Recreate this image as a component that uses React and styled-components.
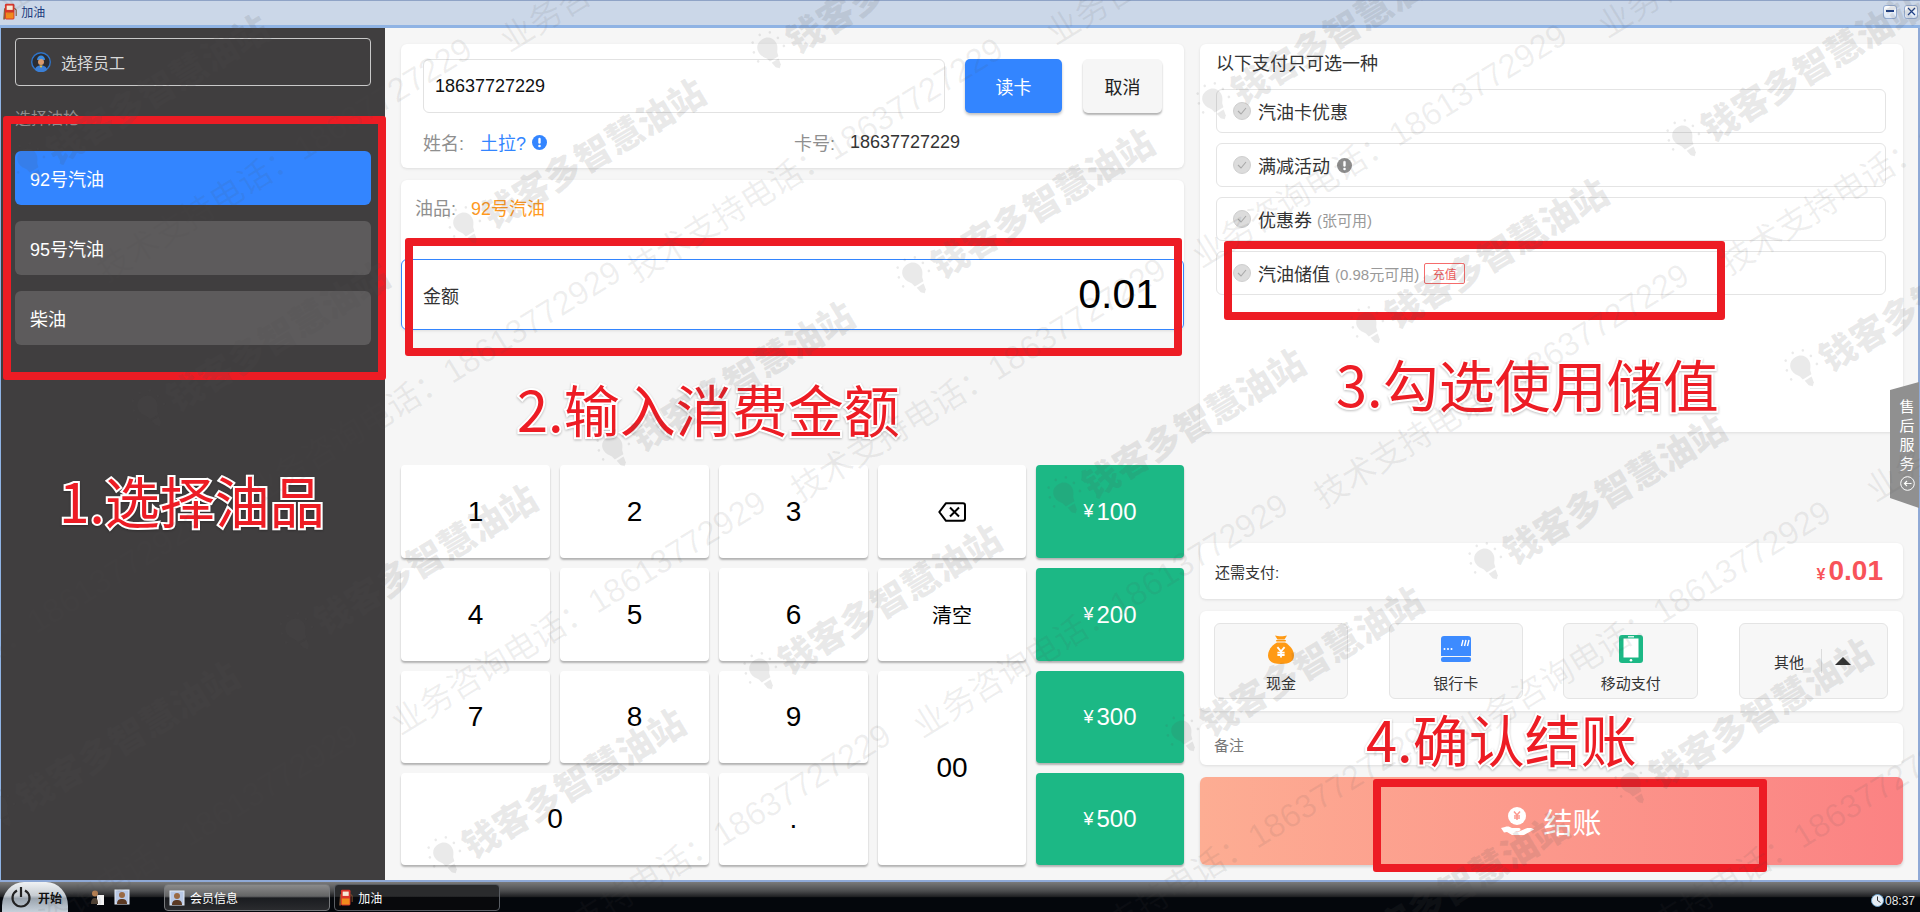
import React from "react";
import styled, { createGlobalStyle } from "styled-components";

const SANS = `"Liberation Sans","Noto Sans CJK SC",sans-serif`;

const Global = createGlobalStyle`
  html, body { margin: 0; padding: 0; background: #f6f6f6; }
  * { box-sizing: border-box; }
  body { font-family: ${SANS}; }
`;

const Screen = styled.div`
  position: relative; width: 1920px; height: 912px; overflow: hidden;
  display: flex; flex-direction: column; font-family: ${SANS}; color: #333;
`;

/* ---------- window chrome ---------- */
const TitleBar = styled.div`
  height: 28px; flex: none; display: flex; align-items: center; gap: 4px; padding: 0 2px 3px 3px;
  background: #cbd7e8; border-top: 1px solid #8fa3c6; border-bottom: 3px solid #8fb3e4;
`;
const TitleText = styled.span` font-size: 12px; color: #1c3b7c; `;
const TitleSpacer = styled.div` flex: 1; `;
const WinBtn = styled.div`
  width: 14px; height: 14px; border: 1px solid #93aad0; border-radius: 3px; background: linear-gradient(#fdfeff,#dbe6f5);
  display: flex; align-items: center; justify-content: center; margin-left: 3px;
`;
const Body = styled.div`
  flex: 1; min-height: 0; display: flex;
  border-left: 1px solid #8fb3e4; border-right: 2px solid #8fa9d6;
`;

/* ---------- sidebar ---------- */
const Sidebar = styled.aside`
  width: 384px; flex: none; background: #403e3f; padding: 10px 14px 0;
`;
const StaffBox = styled.div`
  height: 48px; width: 356px; border: 1px solid #c9c9c9; border-radius: 4px; display: flex; align-items: center;
  padding-left: 15px; gap: 10px; color: #d8d8d8; font-size: 16px;
`;
const SideLabel = styled.div` margin-top: 21px; height: 24px; line-height: 24px; font-size: 16px; color: #8e8e8e; `;
const OilList = styled.div` margin-top: 20px; display: flex; flex-direction: column; gap: 16px; width: 356px; `;
const OilItem = styled.div`
  height: 54px; border-radius: 6px; padding-left: 15px; display: flex; align-items: center;
  font-size: 18px; color: #fff; background: ${p => (p.$active ? "#3385ff" : "#5d5b5c")};
`;

/* ---------- main ---------- */
const Main = styled.main`
  flex: 1; min-width: 0; background: #f6f6f6; display: flex; gap: 16px; padding: 16px 15px 15px 16px;
`;
const Center = styled.div` width: 783px; flex: none; display: flex; flex-direction: column; `;
const Right = styled.div` width: 703px; flex: none; display: flex; flex-direction: column; `;
const Card = styled.section`
  background: #fff; border-radius: 6px; box-shadow: 0 1px 3px rgba(0,0,0,.1);
`;
const MemberCard = styled(Card)` height: 124px; padding: 15px 22px 0; `;
const ReadRow = styled.div` display: flex; align-items: stretch; height: 54px; `;
const CardInput = styled.div`
  width: 522px; border: 1px solid #e2e2e2; border-radius: 6px; display: flex; align-items: center;
  padding-left: 11px; font-size: 18px; color: #111;
`;
const ReadBtn = styled.div`
  width: 97px; margin-left: 20px; border-radius: 5px; background: #3385ff; color: #fff; font-size: 18px;
  display: flex; align-items: center; justify-content: center; box-shadow: 0 2px 3px rgba(0,0,0,.25);
`;
const CancelBtn = styled.div`
  width: 79px; margin-left: 21px; border-radius: 5px; background: #f6f6f6; color: #222; font-size: 18px;
  display: flex; align-items: center; justify-content: center; box-shadow: 0 2px 2px rgba(0,0,0,.3);
`;
const InfoRow = styled.div` margin-top: 17px; display: flex; align-items: center; height: 24px; font-size: 18px; `;
const InfoKey = styled.span` color: #8f8f8f; width: ${p => p.$w}px; flex: none; `;
const NameVal = styled.span` color: #3385ff; margin-right: 6px; `;
const CardNo = styled.span` color: #333; `;
const InfoSlot = styled.div` width: 371px; display: flex; align-items: center; flex: none; `;

const FuelCard = styled(Card)` margin-top: 12px; `;
const FuelRow = styled.div` height: 79px; padding: 0 14px 26px; display: flex; align-items: center; font-size: 18px; `;
const FuelVal = styled.span` color: #ff9a1f; `;
const AmountBox = styled.div`
  height: 71px; border: 1px solid #3385ff; border-radius: 6px; background: #fff; display: flex; align-items: center;
  justify-content: space-between; padding: 0 25px 0 21px;
`;
const AmountLabel = styled.span` font-size: 18px; color: #333; `;
const AmountValue = styled.span` font-size: 41px; color: #000; `;

const Pad = styled.div`
  margin-top: auto; display: grid; gap: 10px;
  grid-template-columns: 149px 149px 149px 148px 148px;
  grid-template-rows: 93px 93px 92px 92px;
`;
const Key = styled.div`
  background: ${p => (p.$green ? "#1cb885" : "#fff")}; color: ${p => (p.$green ? "#fff" : "#000")};
  font-size: ${p => p.$size || 28}px; border-radius: 4px; box-shadow: 0 2px 2px rgba(0,0,0,.28);
  display: flex; align-items: center; justify-content: center;
  grid-column: ${p => p.$col || "auto"}; grid-row: ${p => p.$row || "auto"};
`;
const Yen = styled.span` font-size: 18px; margin-right: 3px; `;

/* ---------- right column ---------- */
const OptionsCard = styled(Card)` height: 388px; padding: 7px 17px 0 16px; `;
const OptionsTitle = styled.div` height: 26px; line-height: 26px; font-size: 18px; color: #333; margin-bottom: 12px; `;
const OptionList = styled.div` display: flex; flex-direction: column; gap: 10px; `;
const Option = styled.div`
  height: 44px; border: 1px solid #e4e4e4; border-radius: 6px; display: flex; align-items: center;
  padding-left: 16px; font-size: 18px; color: #333;
`;
const Check = styled.span`
  width: 18px; height: 18px; border-radius: 50%; background: #dcdcdc; border: 1px solid #cfcfcf; margin-right: 7px; flex: none;
  display: flex; align-items: center; justify-content: center;
`;
const Sub = styled.span` font-size: 15px; color: #999; margin-left: 5px; `;
const Tag = styled.span`
  font-size: 12px; color: #f25c5c; border: 1px solid #f56c6c; border-radius: 2px; width: 41px; height: 21px;
  display: flex; align-items: center; justify-content: center; margin-left: 5px;
`;
const OptionInfo = styled.span` display: flex; margin-left: 7px; `;
const DueCard = styled(Card)`
  margin-top: auto; height: 56px; display: flex; align-items: center; justify-content: space-between; padding: 0 20px 0 15px;
`;
const DueLabel = styled.span` font-size: 15px; color: #333; `;
const DueValue = styled.span` font-size: 28px; font-weight: 700; color: #f8535a; display: flex; align-items: baseline; `;
const DueYen = styled.span` font-size: 16px; margin-right: 3px; `;
const MethodCard = styled(Card)`
  margin-top: 12px; height: 100px; padding: 12px 15px 12px 14px; display: flex; justify-content: space-between;
`;
const Method = styled.div`
  width: ${p => p.$w}px; background: #f7f7f7; border: 1px solid #e4e4e4; border-radius: 6px; display: flex; flex-direction: column;
  align-items: center; padding-top: 10px; font-size: 15px; color: #333;
`;
const MethodIcon = styled.div` height: 30px; display: flex; align-items: center; margin-bottom: 9px; `;
const MethodText = styled.div` line-height: 22px; `;
const MoreBtn = styled.div`
  width: 149px; background: #f7f7f7; border: 1px solid #e4e4e4; border-radius: 6px; display: flex; align-items: center;
  padding-left: 34px; font-size: 15px; color: #333;
`;
const MoreDivider = styled.span` width: 1px; height: 24px; background: #dcdcdc; margin: 0 13px 0 17px; `;
const Arrow = styled.span`
  width: 0; height: 0; border-left: 8px solid transparent; border-right: 8px solid transparent; border-bottom: 8px solid #333;
`;
const NoteCard = styled(Card)`
  margin-top: 12px; height: 42px; display: flex; align-items: center; padding-left: 14px; font-size: 15px; color: #777;
`;
const PayBtn = styled.div`
  margin-top: 12px; height: 88px; border-radius: 6px; background: linear-gradient(90deg,#fdad93,#fb8283);
  display: flex; align-items: center; justify-content: center; gap: 9px; color: #fff; font-size: 29px;
  box-shadow: 0 2px 3px rgba(0,0,0,.15);
`;

/* ---------- taskbar ---------- */
const Taskbar = styled.footer`
  height: 32px; flex: none; display: flex; align-items: stretch; position: relative; padding-left: 2px;
  border-top: 2px solid #8fa9d6;
  background: linear-gradient(#7a7a7a 0,#4b4c4e 30%,#1c1d20 50%,#04070c 52%,#04070c 100%);
`;
const StartOrb = styled.div`
  width: 66px; border-radius: 22px 22px 0 0 / 24px 24px 0 0; display: flex; align-items: center; gap: 6px; padding-left: 8px;
  background: linear-gradient(#f0f2f4,#c6ccd2 45%,#9aa4ae 55%,#c6d0da);
  font-size: 12px; font-weight: 700; color: #111;
`;
const Tray = styled.div` display: flex; align-items: center; gap: 10px; margin-left: 23px; width: 73px; `;
const TaskBtn = styled.div`
  width: 166px; margin: 2px 4px 1px 0; border: 1px solid ${p => (p.$active ? "#5a5e64" : "#77797c")}; border-radius: 4px;
  background: ${p => (p.$active
    ? "linear-gradient(#2a2b2d,#2a2b2d 45%,#08090c 50%)"
    : "linear-gradient(#8b8b8b,#636465 45%,#1a1c20 52%,#2a2b2e)")};
  display: flex; align-items: center; gap: 5px; padding-left: 4px; color: #fff; font-size: 12px;
`;
const Clock = styled.div`
  margin-left: auto; display: flex; align-items: center; gap: 1px; padding: 7px 5px 0 0; color: #e8e8e8; font-size: 12px;
`;

/* ---------- overlays ---------- */
const AfterSale = styled.div`
  position: absolute; left: 1890px; top: 382px; width: 29px; height: 126px; background: #909090;
  clip-path: polygon(0 8px, 100% 0, 100% 100%, 0 116px);
  display: flex; flex-direction: column; align-items: center; padding: 15px 0 0 5px; color: #fff; font-size: 15px; line-height: 19px;
`;
const AfterIcon = styled.div` margin-top: 3px; height: 16px; `;
const RedRect = styled.div.attrs(p => ({ style: { left: p.$x, top: p.$y, width: p.$w, height: p.$h } }))`
  position: absolute; border: 8px solid #ed1c24; border-radius: 3px; z-index: 3;
`;
const Step = styled.div.attrs(p => ({ style: { left: p.$x, top: p.$y } }))`
  position: absolute; z-index: 4; white-space: nowrap; font-family: "Noto Sans CJK SC", sans-serif; font-size: ${p => p.$size}px; line-height: 1;
  color: #ed1c24; -webkit-text-stroke: 4px #fff; paint-order: stroke fill; filter: drop-shadow(0 1px 1px rgba(0,0,0,.25));
`;
const Watermarks = styled.div`
  position: absolute; inset: 0; pointer-events: none; overflow: hidden; z-index: 5;
`;
const PhoneMark = styled.div.attrs(p => ({ style: { left: p.$x, top: p.$y } }))`
  position: absolute; white-space: nowrap; font-size: 33px; line-height: 1; color: rgba(80,80,80,.09);
  font-family: ${SANS}; transform-origin: 0 100%; transform: translateY(-100%) rotate(-31.7deg);
`;
const LogoMark = styled.div.attrs(p => ({ style: { left: p.$x, top: p.$y } }))`
  position: absolute; white-space: nowrap; display: flex; align-items: center; gap: 4px; color: rgba(80,80,80,.12);
  font-size: 36px; font-weight: 900; line-height: 1; font-family: "Noto Sans CJK SC", sans-serif;
  transform-origin: 0 0; transform: rotate(-31deg) translate(-17px,-50%);
`;

/* ---------- drawings ---------- */
const Pump = ({ size = 16 }) => (
  <svg width={size * 0.95} height={size * 1.15} viewBox="0 0 16 20">
    <rect x="2" y="1" width="11" height="18" rx="1.5" fill="#d9352a" />
    <rect x="4" y="3" width="7" height="5" fill="#f6e9d6" />
    <rect x="3" y="11" width="9" height="7" fill="#f08a1d" />
    <path d="M13 6l2 2v7" stroke="#7a4a2a" strokeWidth="1.2" fill="none" />
    <path d="M0 19h2V6H1z" fill="#8b5a36" />
  </svg>
);
const Person = () => (
  <svg width="16" height="16" viewBox="0 0 16 16">
    <rect x="1" y="1" width="14" height="14" fill="#b9c9e6" stroke="#e6edf8" />
    <circle cx="8" cy="6" r="3" fill="#9a6a44" />
    <path d="M3 15c0-4 2-5 5-5s5 1 5 5z" fill="#5b3a24" />
  </svg>
);
const ManDoc = () => (
  <svg width="13" height="15" viewBox="0 0 13 15">
    <rect x="6" y="5" width="7" height="10" fill="#f2f2f2" />
    <circle cx="4" cy="3.5" r="3" fill="#b47f52" />
    <path d="M0 14c0-5 2-6 4-6s3 1 3 6z" fill="#4e4134" />
  </svg>
);
const Avatar = () => (
  <svg width="20" height="20" viewBox="0 0 20 20">
    <circle cx="10" cy="10" r="9.3" fill="#2b2d33" stroke="#2f74c9" strokeWidth="1.4" />
    <path d="M6 8c0-3 2-4.5 4-4.5S14 5 14 8z" fill="#3b8be0" />
    <circle cx="10" cy="10" r="3" fill="#d99a6c" />
    <path d="M4 18c.5-3.5 3-4.5 6-4.5s5.500 1 6 4.500a9 9 0 0 1-12 0z" fill="#3b7fd6" />
    <path d="M8.500 13.500h3L10 16z" fill="#f0c23a" />
  </svg>
);
const InfoDot = ({ color }) => (
  <svg width="15" height="15" viewBox="0 0 15 15">
    <circle cx="7.500" cy="7.500" r="7.500" fill={color} />
    <rect x="6.300" y="2.800" width="2.400" height="6" rx="1.200" fill="#fff" />
    <circle cx="7.500" cy="11" r="1.300" fill="#fff" />
  </svg>
);
const Tick = () => (
  <svg width="10" height="8" viewBox="0 0 10 8">
    <path d="M1 4l3 3 5-6" stroke="#a8a8a8" strokeWidth="1.100" fill="none" />
  </svg>
);
const Backspace = () => (
  <svg width="28" height="20" viewBox="0 0 28 20">
    <path d="M8 1.200h17a2 2 0 0 1 2 2v13.600a2 2 0 0 1-2 2H8L1.300 10z" fill="none" stroke="#000" strokeWidth="2" strokeLinejoin="round" />
    <path d="M12 5.500l9 9M21 5.500l-9 9" stroke="#000" strokeWidth="2" />
  </svg>
);
const YenLines = ({ x, y, s, color }) => (
  <path
    d={`M${x - 3 * s} ${y - 4 * s}L${x} ${y - 0.5 * s}L${x + 3 * s} ${y - 4 * s}M${x} ${y - 0.5 * s}V${y + 4.500 * s}M${x - 3 * s} ${y + 0.5 * s}H${x + 3 * s}M${x - 3 * s} ${y + 2.500 * s}H${x + 3 * s}`}
    stroke={color} strokeWidth={1.500 * s} fill="none"
  />
);
const MoneyBag = () => (
  <svg width="26" height="29" viewBox="0 0 26 29">
    <path d="M7 0.500c3 1 9 1 12 0l-2.500 4h-7z" fill="#ff9a14" />
    <rect x="8" y="5" width="10" height="1.500" rx=".7" fill="#ff9a14" />
    <path d="M9 7.500h8c5 2.500 9 8 9 13 0 5-4 8.500-13 8.500S0 25.500 0 20.500c0-5 4-10.500 9-13z" fill="#ff9a14" />
    <YenLines x={13} y={17} s={1.200} color="#fff" />
  </svg>
);
const BankCard = () => (
  <svg width="30" height="26" viewBox="0 0 30 26">
    <path d="M0 3a3 3 0 0 1 3-3h24a3 3 0 0 1 3 3v17H0z" fill="#3d8bff" />
    <rect x="0" y="21" width="30" height="5" rx="2" fill="#3d8bff" />
    <path d="M22 4l-1.500 6M25 4l-1.500 6M28 4l-1.500 6" stroke="#fff" strokeWidth="1.400" />
    <circle cx="3.500" cy="13" r="1" fill="#fff" /><circle cx="7" cy="13" r="1" fill="#fff" /><circle cx="10.500" cy="13" r="1" fill="#fff" />
  </svg>
);
const Mobile = () => (
  <svg width="24" height="28" viewBox="0 0 24 28">
    <rect width="24" height="28" rx="3" fill="#1cb885" />
    <rect x="4.500" y="3.500" width="15" height="19" fill="#fff" />
    <rect x="9" y="1.200" width="6" height="1.200" fill="#fff" />
    <circle cx="12" cy="25.200" r="1.300" fill="#fff" />
  </svg>
);
const HandCoin = () => (
  <svg width="33" height="29" viewBox="0 0 33 29">
    <circle cx="16" cy="9" r="9" fill="#fff" />
    <YenLines x={16} y={8.500} s={1} color="#fc9a90" />
    <path d="M0 21l4-1c3-1 5 0 7 1h7c2 0 2 3 0 3h-5l5 .5 7-3c3-1 8 0 8 1l-10 5.500H11L6 25l-3 .5z" fill="#fff" />
  </svg>
);
const Power = () => (
  <svg width="22" height="22" viewBox="0 0 22 22">
    <path d="M7 4.500a8.500 8.500 0 1 0 8 0" fill="none" stroke="#222" strokeWidth="2.200" />
    <path d="M11 1v10" stroke="#222" strokeWidth="2.200" />
  </svg>
);
const BackCircle = () => (
  <svg width="15" height="15" viewBox="0 0 15 15">
    <circle cx="7.500" cy="7.500" r="6.800" fill="none" stroke="#fff" strokeWidth="1" />
    <path d="M11.500 7.500H4.500M7 5L4.500 7.500 7 10" fill="none" stroke="#fff" strokeWidth="1.200" />
  </svg>
);
const ClockIcon = () => (
  <svg width="13" height="15" viewBox="0 0 13 15">
    <circle cx="6.500" cy="7.500" r="6" fill="#e6eef6" stroke="#6aa0c8" />
    <path d="M6.500 3.500v4l3 2" stroke="#333" fill="none" />
  </svg>
);
const Bulb = () => (
  <svg width="34" height="44" viewBox="0 0 34 44" fill="currentColor">
    <path d="M17 7c-6 0-10 4-10 10 0 4 2 6 4 9l1 4h10l1-4c2-3 4-5 4-9 0-6-4-10-10-10z" />
    <path d="M13 32h8l-1 6-3 3-3-3z" />
    <circle cx="3" cy="14" r="1.300" /><circle cx="7" cy="5" r="1.300" /><circle cx="17" cy="2" r="1.300" />
    <circle cx="27" cy="5" r="1.300" /><circle cx="31" cy="14" r="1.300" /><circle cx="2" cy="24" r="1.300" /><circle cx="32" cy="24" r="1.300" />
  </svg>
);

const BIZ = "业务咨询电话：18613772929";
const TECH = "技术支持电话：18637727229";
const PHONES = [
  [BIZ, -158, 760], [BIZ, 258, 510], [BIZ, 403, 740], [BIZ, 925, 743], [BIZ, 1204, 273], [BIZ, 1468, 750],
  [BIZ, 1878, 507], [BIZ, -5, 973], [BIZ, 512, 57], [BIZ, 1058, 50], [BIZ, 1610, 43], [BIZ, 8, 20],
  [TECH, 109, 287], [TECH, 640, 287], [TECH, 803, 507], [TECH, 1326, 513], [TECH, 1732, 280],
  [TECH, 528, 973], [TECH, 1063, 975], [TECH, 1608, 975],
];
const LOGOS = [
  [150, 410], [298, 633], [446, 857], [466, 227], [615, 450], [762, 673], [770, 52], [915, 277], [1066, 497],
  [1184, 735], [1215, 103], [1369, 327], [1487, 563], [1633, 787], [1685, 140], [1803, 370], [30, 163], [0, 810], [1330, 960],
];
const RECTS = [
  [3, 116, 383, 264], [405, 238, 777, 118], [1224, 241, 501, 79], [1373, 779, 394, 93],
];
const STEPS = [
  ["1.选择油品", 59, 472, 55], ["2.输入消费金额", 517, 380, 56], ["3.勾选使用储值", 1336, 355, 56], ["4.确认结账", 1366, 710, 56],
];

export default function App() {
  return (
    <Screen>
      <Global />
      <TitleBar>
        <Pump size={15} />
        <TitleText>加油</TitleText>
        <TitleSpacer />
        <WinBtn><svg width="8" height="3"><rect width="8" height="2" fill="#1d3f86" /></svg></WinBtn>
        <WinBtn><svg width="9" height="9" viewBox="0 0 9 9"><path d="M1 1l7 7M8 1L1 8" stroke="#1d3f86" strokeWidth="1.200" /></svg></WinBtn>
      </TitleBar>
      <Body>
        <Sidebar>
          <StaffBox><Avatar />选择员工</StaffBox>
          <SideLabel>选择油枪</SideLabel>
          <OilList>
            <OilItem $active>92号汽油</OilItem>
            <OilItem>95号汽油</OilItem>
            <OilItem>柴油</OilItem>
          </OilList>
        </Sidebar>
        <Main>
          <Center>
            <MemberCard>
              <ReadRow>
                <CardInput>18637727229</CardInput>
                <ReadBtn>读卡</ReadBtn>
                <CancelBtn>取消</CancelBtn>
              </ReadRow>
              <InfoRow>
                <InfoSlot>
                  <InfoKey $w={57}>姓名:</InfoKey>
                  <NameVal>土拉?</NameVal>
                  <InfoDot color="#3385ff" />
                </InfoSlot>
                <InfoKey $w={56}>卡号:</InfoKey>
                <CardNo>18637727229</CardNo>
              </InfoRow>
            </MemberCard>
            <FuelCard>
              <FuelRow>
                <InfoKey $w={56}>油品:</InfoKey>
                <FuelVal>92号汽油</FuelVal>
              </FuelRow>
              <AmountBox>
                <AmountLabel>金额</AmountLabel>
                <AmountValue>0.01</AmountValue>
              </AmountBox>
            </FuelCard>
            <Pad>
              <Key>1</Key><Key>2</Key><Key>3</Key>
              <Key><Backspace /></Key>
              <Key $green $size={24}><Yen>¥</Yen>100</Key>
              <Key>4</Key><Key>5</Key><Key>6</Key>
              <Key $size={20}>清空</Key>
              <Key $green $size={24}><Yen>¥</Yen>200</Key>
              <Key>7</Key><Key>8</Key><Key>9</Key>
              <Key $row="3 / 5" $col="4">00</Key>
              <Key $green $size={24}><Yen>¥</Yen>300</Key>
              <Key $col="1 / 3">0</Key>
              <Key>.</Key>
              <Key $green $size={24} $col="5"><Yen>¥</Yen>500</Key>
            </Pad>
          </Center>
          <Right>
            <OptionsCard>
              <OptionsTitle>以下支付只可选一种</OptionsTitle>
              <OptionList>
                <Option><Check><Tick /></Check>汽油卡优惠</Option>
                <Option><Check><Tick /></Check>满减活动<OptionInfo><InfoDot color="#8d8d8d" /></OptionInfo></Option>
                <Option><Check><Tick /></Check>优惠券<Sub>(张可用)</Sub></Option>
                <Option><Check><Tick /></Check>汽油储值<Sub>(0.98元可用)</Sub><Tag>充值</Tag></Option>
              </OptionList>
            </OptionsCard>
            <DueCard>
              <DueLabel>还需支付:</DueLabel>
              <DueValue><DueYen>¥</DueYen>0.01</DueValue>
            </DueCard>
            <MethodCard>
              <Method $w={134}><MethodIcon><MoneyBag /></MethodIcon><MethodText>现金</MethodText></Method>
              <Method $w={134}><MethodIcon><BankCard /></MethodIcon><MethodText>银行卡</MethodText></Method>
              <Method $w={135}><MethodIcon><Mobile /></MethodIcon><MethodText>移动支付</MethodText></Method>
              <MoreBtn>其他<MoreDivider /><Arrow /></MoreBtn>
            </MethodCard>
            <NoteCard>备注</NoteCard>
            <PayBtn><HandCoin />结账</PayBtn>
          </Right>
        </Main>
      </Body>
      <Taskbar>
        <StartOrb><Power />开始</StartOrb>
        <Tray><ManDoc /><Person /></Tray>
        <TaskBtn><Person />会员信息</TaskBtn>
        <TaskBtn $active><Pump size={15} />加油</TaskBtn>
        <Clock><ClockIcon />08:37</Clock>
      </Taskbar>

      <AfterSale>
        <span>售</span><span>后</span><span>服</span><span>务</span>
        <AfterIcon><BackCircle /></AfterIcon>
      </AfterSale>

      {RECTS.map(([x, y, w, h]) => <RedRect key={`${x}-${y}`} $x={x} $y={y} $w={w} $h={h} />)}
      {STEPS.map(([t, x, y, s]) => <Step key={t} $x={x} $y={y} $size={s}>{t}</Step>)}

      <Watermarks>
        {PHONES.map(([t, x, y]) => <PhoneMark key={`${x}-${y}`} $x={x} $y={y}>{t}</PhoneMark>)}
        {LOGOS.map(([x, y]) => <LogoMark key={`${x}-${y}`} $x={x} $y={y}><Bulb />钱客多智慧油站</LogoMark>)}
      </Watermarks>
    </Screen>
  );
}
